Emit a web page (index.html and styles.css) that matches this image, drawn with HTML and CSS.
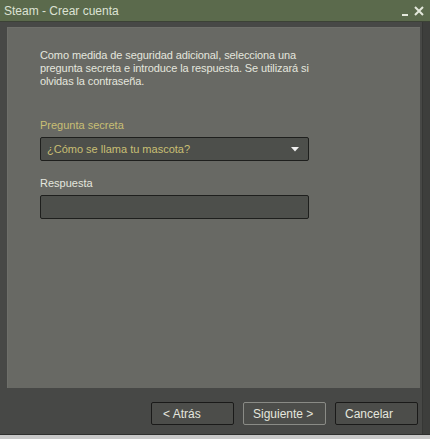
FILE: index.html
```html
<!DOCTYPE html>
<html lang="es">
<head>
    <meta charset="UTF-8">
    <meta name="viewport" content="width=device-width, initial-scale=1.0">
    <title>Steam - Crear cuenta</title>
    <link rel="stylesheet" href="styles.css">
</head>
<body>
    <div class="window">
        <div class="titlebar">
            <span class="title">Steam - Crear cuenta</span>
            <div class="window-buttons">
                <span class="min-button"></span>
                <svg class="close-button" width="10" height="10" viewBox="0 0 10 10">
                    <path d="M1 1 L9 9 M9 1 L1 9" stroke="#e4e8dc" stroke-width="2"/>
                </svg>
            </div>
        </div>

        <div class="content">
            <div class="panel">
                <p class="intro">Como medida de seguridad adicional, selecciona una pregunta secreta e introduce la respuesta. Se utilizará si olvidas la contraseña.</p>

                <label class="field-label active" for="question">Pregunta secreta</label>
                <div class="select-box" id="question">
                    <span>¿Cómo se llama tu mascota?</span>
                    <svg width="8" height="5" viewBox="0 0 8 5">
                        <path d="M0 0 L8 0 L4 4.5 Z" fill="#f0f0f0"/>
                    </svg>
                </div>

                <label class="field-label" for="answer">Respuesta</label>
                <input class="text-box" type="text" id="answer">
            </div>

            <div class="footer">
                <button class="steam-button back-button">&lt; Atrás</button>
                <button class="steam-button default-button">Siguiente &gt;</button>
                <button class="steam-button">Cancelar</button>
            </div>
        </div>
    </div>
</body>
</html>
```

FILE: styles.css
```css
/* Page around the window */
body {
    margin: 0;
    background-color: #c8c8c8;
    font-family: "Liberation Sans", Arial, sans-serif;
    font-size: 11px;
}

.window {
    width: 430px;
    height: 435px;
    display: flex;
    flex-direction: column;
    background-color: #3d3e3c;
    border-bottom: 1px solid #2e2f2d;
    box-sizing: border-box;
}

/* Green title bar */
.titlebar {
    height: 21px;
    display: flex;
    align-items: center;
    justify-content: space-between;
    padding: 0 6px 0 4px;
    background-color: #5b6a4c;
    border-bottom: 1px solid #3c4236;
}

.title {
    color: #dde2d4;
    font-size: 12px;
}

.window-buttons {
    display: flex;
    align-items: flex-end;
    gap: 6px;
    height: 10px;
}

.min-button {
    width: 6px;
    height: 2px;
    background-color: #e4e8dc;
}

.content {
    flex: 1;
    display: flex;
    flex-direction: column;
    padding: 5px 2px 0 7px;
    margin-right: 7px;
    border-right: 1px solid #363735;
    background-color: #474846;
}

/* Grey inner panel */
.panel {
    height: 361px;
    box-sizing: border-box;
    padding: 21px 111px 0 32px;
    background-color: #686964;
    border-top: 1px solid #6e6f6a;
    border-left: 1px solid #6e6f6a;
}

.intro {
    margin: 0 0 31px 0;
    color: #e4e6de;
    line-height: 13px;
    letter-spacing: -0.1px;
}

.field-label {
    display: block;
    color: #e4e6de;
    margin-bottom: 6px;
}

.field-label.active {
    color: #c9bf74;
}

.select-box {
    height: 24px;
    box-sizing: border-box;
    display: flex;
    align-items: center;
    justify-content: space-between;
    padding: 0 9px 0 6px;
    margin-bottom: 16px;
    background-color: #4d4f4b;
    border: 1px solid #1e1f1d;
    border-radius: 2px;
    color: #c9bf74;
}

.text-box {
    display: block;
    width: 100%;
    height: 24px;
    box-sizing: border-box;
    margin: 0;
    background-color: #4d4f4b;
    border: 1px solid #1e1f1d;
    border-radius: 2px;
}

/* Button row */
.footer {
    display: flex;
    justify-content: flex-end;
    gap: 9px;
    padding-top: 14px;
    padding-right: 2px;
}

.steam-button {
    width: 83px;
    height: 23px;
    padding: 0 0 0 9px;
    text-align: left;
    font-family: "Liberation Sans", Arial, sans-serif;
    font-size: 12px;
    color: #e4e6de;
    background-color: #4c4d4a;
    border: 1px solid #1a1a19;
    border-radius: 2px;
    cursor: pointer;
}

.back-button {
    padding-left: 11px;
}

.default-button {
    border-color: #8a8b86;
}
```
